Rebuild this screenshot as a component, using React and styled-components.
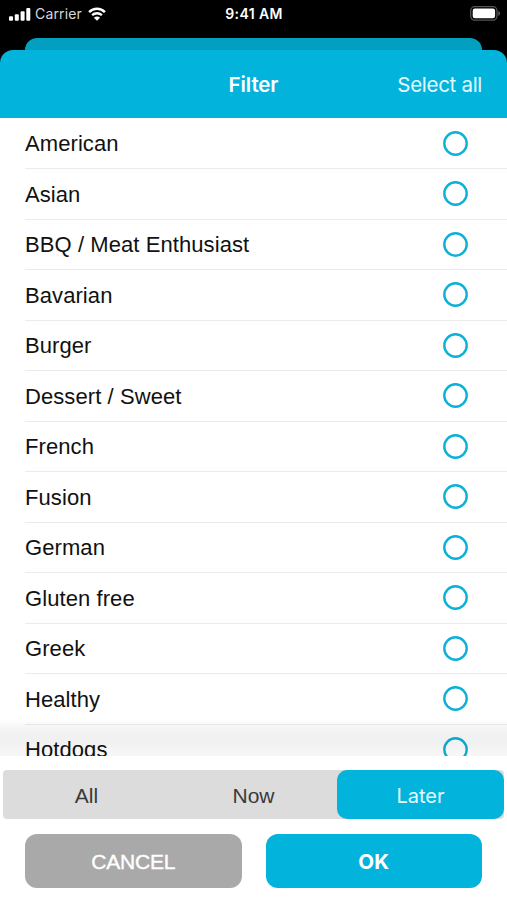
import React from "react";
import styled, { createGlobalStyle } from "styled-components";

const cuisines = [
  "American",
  "Asian",
  "BBQ / Meat Enthusiast",
  "Bavarian",
  "Burger",
  "Dessert / Sweet",
  "French",
  "Fusion",
  "German",
  "Gluten free",
  "Greek",
  "Healthy",
  "Hotdogs",
];

const App = () => {
  return (
    <Screen>
      <GlobalStyle />
      <StatusBar>
        <Carrier>
          <svg width="22" height="14" viewBox="0 0 22 14" fill="#fff">
            <rect x="0" y="9.3" width="4" height="4.5" rx="1" />
            <rect x="5.8" y="7.2" width="4" height="6.6" rx="1" />
            <rect x="11.6" y="4.2" width="4" height="9.6" rx="1" />
            <rect x="17.3" y="1" width="4" height="12.8" rx="1" />
          </svg>
          <CarrierName>Carrier</CarrierName>
          <svg width="18" height="14" viewBox="0 0 18 14" fill="none">
            <path
              d="M1.1 5.1C5.6.7 12.4.7 16.9 5.1"
              stroke="#fff"
              strokeWidth="2.5"
            />
            <path
              d="M4.1 8.2c2.8-2.6 7-2.6 9.8 0"
              stroke="#fff"
              strokeWidth="2.3"
            />
            <path d="M9 13.8 5.9 10.7c1.8-1.5 4.4-1.5 6.2 0Z" fill="#fff" />
          </svg>
        </Carrier>
        <Time>9:41 AM</Time>
        <Battery>
          <svg width="31" height="15" viewBox="0 0 31 15">
            <rect
              x="0.7"
              y="0.7"
              width="26.3"
              height="13.4"
              rx="4"
              fill="none"
              stroke="#555"
              strokeWidth="1.3"
            />
            <rect x="2.7" y="2.6" width="22.4" height="9.6" rx="2.2" fill="#fff" />
            <path d="M28.4 5c2.1.8 2.1 4 0 4.8Z" fill="#666" />
          </svg>
        </Battery>
      </StatusBar>
      <BackSheet />
      <Header>
        <Title>Filter</Title>
        <SelectAll>Select all</SelectAll>
      </Header>
      <List>
        {cuisines.map((name) => (
          <Row key={name}>
            <Name>{name}</Name>
            <Radio viewBox="0 0 25 25">
              <circle cx="12.5" cy="12.5" r="11.2" />
            </Radio>
          </Row>
        ))}
        <Fade />
      </List>
      <Segments>
        <Segment>All</Segment>
        <Segment>Now</Segment>
        <Segment $active>Later</Segment>
      </Segments>
      <Actions>
        <Button>CANCEL</Button>
        <Button $primary>OK</Button>
      </Actions>
    </Screen>
  );
};

export default App;

const GlobalStyle = createGlobalStyle`
  * {
    box-sizing: border-box;
  }
  body {
    margin: 0;
    background: #fff;
    overflow: hidden;
  }
`;

const Screen = styled.div`
  width: 507px;
  height: 900px;
  display: flex;
  flex-direction: column;
  background: linear-gradient(#000 100px, #fff 100px);
  font-family: "Liberation Sans", Arial, sans-serif;
`;

const StatusBar = styled.div`
  height: 38px;
  flex-shrink: 0;
  display: grid;
  grid-template-columns: 1fr auto 1fr;
  align-items: start;
  padding: 6px 6px 0 9px;
  color: #fff;
  font-family: Inter, sans-serif;
  font-size: 14px;
  line-height: 16px;
`;

const Carrier = styled.div`
  display: flex;
  align-items: center;
  color: #d8d8d8;
`;

const CarrierName = styled.span`
  margin: 0 6px 0 4px;
  letter-spacing: 0.15px;
`;

const Time = styled.div`
  font-size: 14px;
  font-weight: 600;
  letter-spacing: 0.4px;
  margin-right: 2px;
`;

const Battery = styled.div`
  display: flex;
  justify-content: flex-end;
`;

const BackSheet = styled.div`
  height: 12px;
  flex-shrink: 0;
  margin: 0 25px;
  border-radius: 12px 12px 0 0;
  background: #029fc1;
`;

const Header = styled.div`
  height: 68px;
  flex-shrink: 0;
  display: grid;
  grid-template-columns: 1fr auto 1fr;
  align-items: center;
  padding: 0 25px;
  border-radius: 13px 13px 0 0;
  background: #02b4dc;
  color: #fff;
  font-family: Inter, sans-serif;
  font-size: 20.5px;
`;

const Title = styled.div`
  grid-column: 2;
  font-weight: 600;
  letter-spacing: -0.1px;
`;

const SelectAll = styled.div`
  justify-self: end;
  letter-spacing: -0.3px;
  color: #e6f8fc;
`;

const List = styled.div`
  position: relative;
  height: 638px;
  flex-shrink: 0;
  padding-top: 0.6px;
  overflow: hidden;
  background: #fff;
`;

const Row = styled.div`
  height: 50.5px;
  margin-left: 25px;
  padding-right: 39px;
  display: flex;
  align-items: center;
  justify-content: space-between;
  border-bottom: 1.5px solid #ebebeb;
`;

const Name = styled.div`
  font-size: 22px;
  line-height: 26px;
  letter-spacing: 0.08px;
  color: #111;
  padding-top: 2px;
`;

const Radio = styled.svg`
  width: 25px;
  height: 25px;
  fill: none;
  stroke: #0cb0d8;
  stroke-width: 2.4px;
`;

/* shade over the last visible row */
const Fade = styled.div`
  position: absolute;
  left: 0;
  right: 0;
  bottom: 0;
  height: 38px;
  background: linear-gradient(
    rgba(0, 0, 0, 0),
    rgba(0, 0, 0, 0.055) 40%,
    rgba(0, 0, 0, 0.055) 65%,
    rgba(0, 0, 0, 0.03)
  );
`;

const Segments = styled.div`
  height: 48.6px;
  flex-shrink: 0;
  display: grid;
  grid-template-columns: repeat(3, 1fr);
  margin: 14.4px 3px 0;
  border-radius: 4px;
  background: #dcdcdc;
`;

const Segment = styled.div`
  display: flex;
  align-items: center;
  justify-content: center;
  padding-top: 2.4px;
  font-family: ${({ $active }) =>
    $active ? "Inter, sans-serif" : '"Liberation Sans", Arial, sans-serif'};
  font-size: ${({ $active }) => ($active ? "20px" : "21px")};
  border-radius: ${({ $active }) => ($active ? "10px" : "0")};
  background: ${({ $active }) => ($active ? "#02b4dc" : "transparent")};
  color: ${({ $active }) => ($active ? "#e6f8fc" : "#3a3a3a")};
`;

const Actions = styled.div`
  display: grid;
  grid-template-columns: 1fr 1fr;
  gap: 24px;
  margin: 15px 25px 0;
`;

const Button = styled.button`
  height: 53.7px;
  padding: 2px 0 0;
  border: none;
  border-radius: 12px;
  background: ${({ $primary }) => ($primary ? "#02b4dc" : "#a9a9a9")};
  color: #fff;
  font-family: ${({ $primary }) =>
    $primary ? "Inter, sans-serif" : '"Liberation Sans", Arial, sans-serif'};
  font-size: ${({ $primary }) => ($primary ? "20.5px" : "21px")};
  font-weight: ${({ $primary }) => ($primary ? 700 : 400)};
  letter-spacing: ${({ $primary }) => ($primary ? "0.2px" : "-0.2px")};
  -webkit-text-stroke: ${({ $primary }) => ($primary ? "0" : "0.4px #fff")};
`;
